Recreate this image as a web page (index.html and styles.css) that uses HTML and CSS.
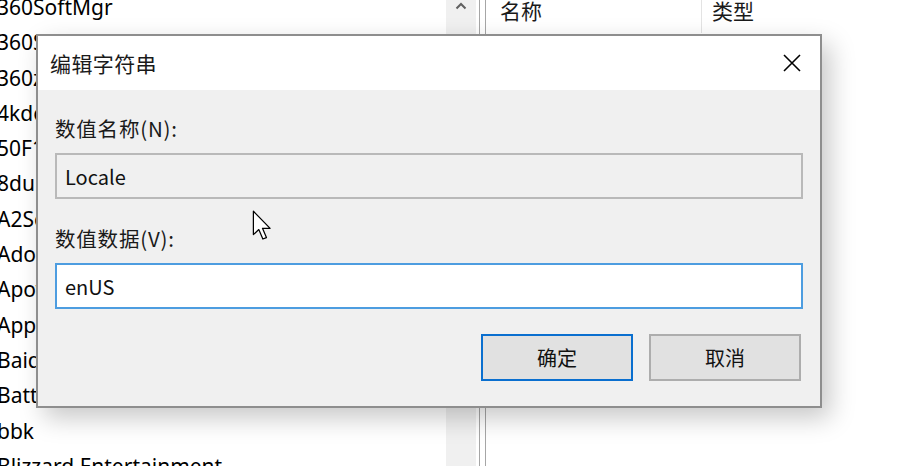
FILE: index.html
```html
<!DOCTYPE html>
<html lang="zh-CN">
<head>
    <meta charset="UTF-8">
    <meta name="viewport" content="width=device-width, initial-scale=1.0">
    <title>编辑字符串</title>
    <link rel="stylesheet" href="styles.css">
</head>
<body>
    <!-- Registry editor behind the dialog -->
    <div class="regedit">
        <div class="tree">
            <div class="key">360SoftMgr</div>
            <div class="key">360SoftWareMgr</div>
            <div class="key">360zip</div>
            <div class="key">4kdownload</div>
            <div class="key">50F1A8D2</div>
            <div class="key">8dubbing</div>
            <div class="key">A2Soft</div>
            <div class="key">Adobe</div>
            <div class="key">Apowersoft</div>
            <div class="key">AppDataLow</div>
            <div class="key">Baidu</div>
            <div class="key">Battle.net</div>
            <div class="key">bbk</div>
            <div class="key">Blizzard Entertainment</div>
        </div>
        <div class="scrollbar">
            <svg class="arrow-up" width="12" height="8" viewBox="0 0 12 8">
                <path d="M1.5 6.5 L6 2 L10.5 6.5" fill="none" stroke="#606060" stroke-width="2"/>
            </svg>
        </div>
        <div class="splitter"></div>
        <div class="values">
            <div class="values-head">
                <div class="col col-name">名称</div>
                <div class="col col-type">类型</div>
            </div>
        </div>
    </div>

    <!-- Edit string dialog -->
    <div class="dialog">
        <div class="dialog-title">
            <span>编辑字符串</span>
            <svg class="close" width="20" height="20" viewBox="0 0 20 20">
                <path d="M2 2 L18 18 M18 2 L2 18" stroke="#000" stroke-width="1.6"/>
            </svg>
        </div>
        <div class="dialog-body">
            <div class="label">数值名称(N):</div>
            <div class="field field-readonly">Locale</div>
            <div class="label">数值数据(V):</div>
            <div class="field field-active">enUS</div>
            <div class="buttons">
                <div class="btn btn-default">确定</div>
                <div class="btn">取消</div>
            </div>
        </div>
    </div>

    <!-- Mouse pointer -->
    <svg class="pointer" width="20" height="32" viewBox="0 0 16 26">
        <path d="M1 1 V20 L5.4 15.9 L8.7 23.6 L11.6 22.4 L8.4 14.9 H14.6 Z" fill="#fff" stroke="#000" stroke-width="1" stroke-linejoin="round"/>
    </svg>
</body>
</html>
```

FILE: styles.css
```css
* {
    margin: 0;
    padding: 0;
    box-sizing: border-box;
}

body {
    width: 912px;
    height: 466px;
    overflow: hidden;
    position: relative;
    background-color: #fff;
    font-family: "Noto Sans CJK SC", "Noto Sans", sans-serif;
    color: #000;
}

/* Registry editor background */
.regedit {
    display: flex;
    height: 100%;
}

.tree {
    width: 446px;
    overflow: hidden;
    margin-top: -10px;
    font-family: "Noto Sans", "Noto Sans CJK SC", sans-serif;
    font-size: 21px;
    line-height: 35.3px;
    white-space: nowrap;
}

.key {
    margin-left: -3px;
}

.scrollbar {
    width: 30px;
    background-color: #f0f0f0;
    display: flex;
    justify-content: center;
}

.arrow-up {
    margin-top: 2px;
}

.splitter {
    width: 7px;
    margin-left: 3px;
    border-left: 1px solid #a6a6a6;
    border-right: 1px solid #a6a6a6;
}

.values {
    flex: 1;
}

.values-head {
    display: flex;
    height: 33px;
    font-size: 21px;
    line-height: 20px;
    color: #1a1a1a;
}

.col {
    padding-left: 14px;
}

.col-name {
    width: 216px;
    border-right: 1px solid #e3e3e3;
}

.col-type {
    padding-left: 10px;
}

/* Dialog */
.dialog {
    position: absolute;
    left: 36px;
    top: 34px;
    width: 786px;
    height: 374px;
    border: 2px solid #8e8e8e;
    background-color: #f0f0f0;
    box-shadow: 8px 10px 24px rgba(0, 0, 0, 0.22);
    display: flex;
    flex-direction: column;
}

.dialog-title {
    height: 54px;
    background-color: #fff;
    display: flex;
    align-items: center;
    justify-content: space-between;
    padding: 0 18px 0 12px;
    font-size: 21px;
    letter-spacing: 0.4px;
    color: #1a1a1a;
}

.dialog-body {
    padding: 26px 17px 0 17px;
}

.label {
    font-size: 20.5px;
    letter-spacing: 0.8px;
    line-height: 24px;
    margin-bottom: 13px;
    color: #1a1a1a;
}

.field {
    height: 46px;
    padding-left: 8px;
    display: flex;
    align-items: center;
    font-size: 20px;
    color: #111;
    margin-bottom: 27px;
}

.field-readonly {
    border: 2px solid #b9b9b9;
    background-color: #f0f0f0;
}

.field-active {
    border: 2px solid #4d9de0;
    background-color: #fff;
    margin-bottom: 25px;
}

.buttons {
    display: flex;
    justify-content: flex-end;
    gap: 16px;
    padding-right: 2px;
}

.btn {
    width: 152px;
    height: 47px;
    border: 2px solid #adadad;
    background-color: #e1e1e1;
    display: flex;
    align-items: center;
    justify-content: center;
    font-size: 20px;
    color: #111;
}

.btn-default {
    border-color: #0a6fcf;
}

.pointer {
    position: absolute;
    left: 252px;
    top: 210px;
}
```
